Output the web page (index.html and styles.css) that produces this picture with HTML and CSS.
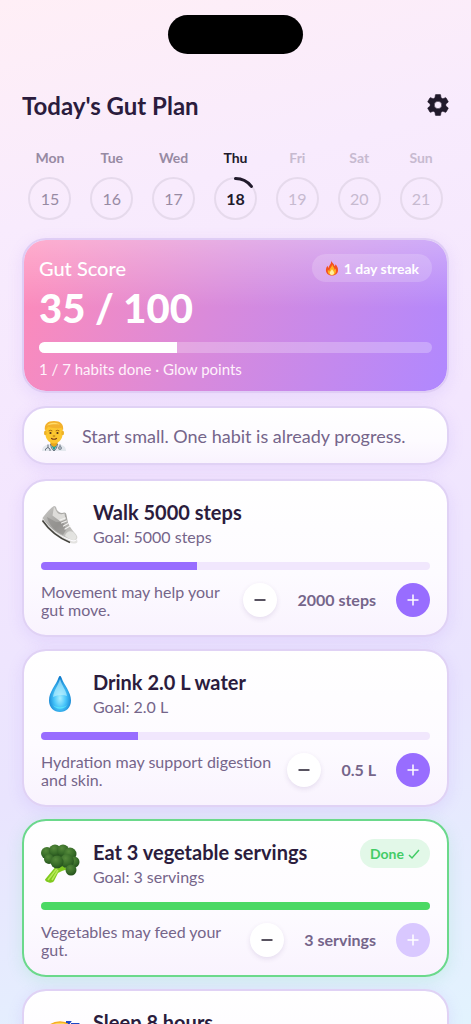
FILE: index.html
```html
<!DOCTYPE html>
<html lang="en">
<head>
    <meta charset="UTF-8">
    <meta name="viewport" content="width=device-width, initial-scale=1.0">
    <title>Today's Gut Plan</title>
    <link rel="stylesheet" href="styles.css">
</head>
<body>
    <div class="app">
        <div class="island"></div>
        <header class="header">
            <h1>Today's Gut Plan</h1>
            <button type="button" class="settings" aria-label="Settings">
                <svg viewBox="2 2 20 20" width="22" height="22"><path fill="#211a2b" stroke="#211a2b" stroke-width=".5" stroke-linejoin="round" d="M19.14 12.94c.04-.3.06-.61.06-.94s-.02-.64-.07-.94l2.03-1.58a.49.49 0 0 0 .12-.61l-1.92-3.32a.49.49 0 0 0-.59-.22l-2.39.96a7 7 0 0 0-1.62-.94l-.36-2.54A.48.48 0 0 0 13.92 2.4h-3.84a.48.48 0 0 0-.47.41l-.36 2.54c-.59.24-1.13.57-1.62.94l-2.39-.96a.48.48 0 0 0-.59.22L2.74 8.87a.48.48 0 0 0 .12.61l2.03 1.58c-.05.3-.09.63-.09.94s.02.64.07.94l-2.03 1.58a.49.49 0 0 0-.12.61l1.92 3.32c.12.22.37.29.59.22l2.39-.96c.5.38 1.03.7 1.62.94l.36 2.54c.05.24.24.41.48.41h3.84c.24 0 .44-.17.47-.41l.36-2.54c.59-.24 1.13-.56 1.62-.94l2.39.96c.22.08.47 0 .59-.22l1.92-3.32a.48.48 0 0 0-.12-.61zM12 15.4a3.4 3.4 0 1 1 0-6.8 3.4 3.4 0 0 1 0 6.8z"/></svg>
            </button>
        </header>

        <div class="week">
            <div class="day"><span>Mon</span><span class="date">15</span></div>
            <div class="day"><span>Tue</span><span class="date">16</span></div>
            <div class="day"><span>Wed</span><span class="date">17</span></div>
            <div class="day today">
                <span>Thu</span>
                <span class="date">18
                    <svg class="ring" viewBox="0 0 42 42"><path d="M21 1.500A19.500 19.500 0 0 1 36.500 9.200" fill="none" stroke="#211a2b" stroke-width="3" stroke-linecap="round"/></svg>
                </span>
            </div>
            <div class="day future"><span>Fri</span><span class="date">19</span></div>
            <div class="day future"><span>Sat</span><span class="date">20</span></div>
            <div class="day future"><span>Sun</span><span class="date">21</span></div>
        </div>

        <section class="score">
            <div class="score-top">
                <h2>Gut Score</h2>
                <span class="streak">
                    <svg viewBox="0 0 14 16" width="14" height="16">
                        <path fill="#f4511e" d="M6 .6c.8 2 3.200 3.200 3.600 5.600.6-.5.9-1.200.9-2 1.800 2 2.700 4 2.500 6.200C12.700 13.600 10.200 15.500 7 15.500S1.100 13.500.9 10.500c-.1-2 .7-3.600 1.700-4.800.1 1.100.4 1.800 1 2.300C4.100 5 6.900 3.700 6 .6z"/>
                        <path fill="#ffb020" d="M7.200 4.500c.4 2 2.300 3 2.400 5.200.5-.3.8-.8 1-1.300 1.300 3.700-.5 6.700-3.600 6.700-3 0-4.800-2.200-4.100-5.500.4.8.9 1.200 1.500 1.400-.1-2.500 2.500-3.700 2.800-6.500z"/>
                        <path fill="#fff0a0" d="M7 9c.3 1.500 2 2.200 2 3.800 0 1.300-.9 2.200-2.100 2.200-1.300 0-2.200-.9-2.100-2.200C4.900 11.300 6.700 10.600 7 9z"/>
                    </svg>
                    1 day streak
                </span>
            </div>
            <div class="points">35 / 100</div>
            <div class="bar bar-score"><div class="fill" style="width: 35%"></div></div>
            <p>1 / 7 habits done · Glow points</p>
        </section>

        <section class="tip">
            <svg viewBox="0 0 26 32" width="26" height="32">
                <path fill="#e4e8ee" d="M1 31c0-4.500 3-6 8-7h8c5 1 8 2.500 8 7z"/>
                <path fill="#23a093" d="M9.500 23.500h7L13 31z"/>
                <path fill="#e9a51b" d="M9.500 20h7v5L13 27l-3.500-2z"/>
                <path fill="#fcc62f" d="M4.500 9.500C4.500 4 8 2.500 13 2.500s8.500 1.500 8.500 7v5c0 5-4.500 9-8.500 9s-8.500-4-8.500-9z"/>
                <ellipse cx="4.300" cy="13" rx="1.300" ry="2.200" fill="#eeb126"/>
                <ellipse cx="21.700" cy="13" rx="1.300" ry="2.200" fill="#eeb126"/>
                <path fill="#f3b12c" d="M4 11C2.800 4 6.500 1 13 1s10.200 3 9 10l-1.500-3.300C15 8.800 10 8 7 6.500 6.500 8.500 5 9 4 11z"/>
                <path fill="#ffdc69" d="M6 5.500C8 2.500 14 1.500 19 4.500 15 4 10 4 6 5.500z"/>
                <path stroke="#a66a14" fill="none" stroke-linecap="round" d="M8 10.700q1.500-1 3 0M15 10.700q1.500-1 3 0M12.200 16h1.600"/>
                <circle cx="9.500" cy="13" r="1.100" fill="#4f301a"/>
                <circle cx="16.500" cy="13" r="1.100" fill="#4f301a"/>
                <path stroke="#7d3d17" fill="none" stroke-width="1.200" stroke-linecap="round" d="M10.500 18.500q2.500 1.500 5 0"/>
                <path stroke="#68727f" fill="none" d="M7 24.500v3.500M19 24.500v2M4.500 30.500V29q2.500-3 4.500 0v2M9.500 24l1 4L13 31l2.500-3 1-4"/>
                <circle cx="19" cy="28" r="1.600" fill="#a5afba" stroke="#68727f" stroke-width=".6"/>
            </svg>
            <p>Start small. One habit is already progress.</p>
        </section>

        <main class="habits">
            <article class="habit">
                <div class="habit-head">
                    <svg viewBox="0 0 40 40" width="40" height="40">
                        <defs>
                            <linearGradient id="shoe" x1="0" y1="0" x2="1" y2="1"><stop offset="0" stop-color="#c9c8c6"/><stop offset=".5" stop-color="#a3a29f"/><stop offset="1" stop-color="#dddcd9"/></linearGradient>
                        </defs>
                        <path fill="#e4e3e1" d="M1 14c7 9 16 17 27 22 4 2 7 2 8-1l.5 3c-1 2-5 2-9 .5C17 34 7 27 1 18z"/>
                        <path fill="none" stroke="#45443f" stroke-width="1.500" d="M1.500 16.500C8 26 18 34 29 38.500"/>
                        <path fill="url(#shoe)" d="M1.500 14C4 11 8 5 13 2c1.500 0 2.500 1 2.700 3.500 1.800 3 4.500 4 7.500 3 1.300 0 2 .8 2.200 2.200l1.600 8c2 5 5 8 7.500 11 3 3 2.500 7-2.500 6.500C20 33 8 24 1.500 14z"/>
                        <path fill="#dddcd9" d="M13 2.500l2 4c2 4 5 4.500 8.500 3l1 6-5 2-8-6z"/>
                        <path fill="#83827f" d="M6 13l9 5 7 0 3 8-3 5C14 27 8 21 6 13z" opacity=".5"/>
                        <path fill="none" stroke="#f3f2f0" stroke-width="1.200" stroke-linecap="round" d="M19 16l5.500-2M20.500 19l5-2M22.500 22l4.500-2.500M24 25l5-3"/>
                        <path fill="#e9e8e6" d="M24 32c1-4 5-6 8-4 4 3 4 7 1 8-3 0-6-2-9-4z" opacity=".8"/>
                    </svg>
                    <div class="habit-title">
                        <h3>Walk 5000 steps</h3>
                        <p>Goal: 5000 steps</p>
                    </div>
                </div>
                <div class="bar"><div class="fill" style="width: 40%"></div></div>
                <div class="habit-foot">
                    <p>Movement may help your gut move.</p>
                    <div class="stepper">
                        <button type="button" class="minus" aria-label="Less"><svg viewBox="0 0 12 12" width="12" height="12"><path d="M.5 6h11"/></svg></button>
                        <span>2000 steps</span>
                        <button type="button" class="plus" aria-label="More"><svg viewBox="0 0 12 12" width="12" height="12"><path d="M.5 6h11M6 .5v11"/></svg></button>
                    </div>
                </div>
            </article>

            <article class="habit">
                <div class="habit-head">
                    <svg viewBox="0 0 40 40" width="40" height="40">
                        <defs>
                            <radialGradient id="drop" cx=".5" cy=".62" r=".6"><stop offset="0" stop-color="#a9efff"/><stop offset=".45" stop-color="#48c5fa"/><stop offset="1" stop-color="#0875c9"/></radialGradient>
                        </defs>
                        <path fill="url(#drop)" d="M19 2c.7 0 1 .5 1.500 1.800C23 11 30 18 30 26.500 30 33.500 25 38 19 38S8 33.500 8 26.500C8 18 15 11 17.500 3.800 18 2.500 18.300 2 19 2z"/>
                        <path fill="#c6f3ff" opacity=".6" d="M19 5c2 7 6 11 7 17-4-2-10-1-14 1C13 16 17 12 19 5z"/>
                        <path fill="#5eecfb" opacity=".7" d="M12 31c3 5 11 5 14 0-3 3-11 3-14 0z"/>
                    </svg>
                    <div class="habit-title">
                        <h3>Drink 2.0 L water</h3>
                        <p>Goal: 2.0 L</p>
                    </div>
                </div>
                <div class="bar"><div class="fill" style="width: 25%"></div></div>
                <div class="habit-foot">
                    <p>Hydration may support digestion and skin.</p>
                    <div class="stepper">
                        <button type="button" class="minus" aria-label="Less"><svg viewBox="0 0 12 12" width="12" height="12"><path d="M.5 6h11"/></svg></button>
                        <span>0.5 L</span>
                        <button type="button" class="plus" aria-label="More"><svg viewBox="0 0 12 12" width="12" height="12"><path d="M.5 6h11M6 .5v11"/></svg></button>
                    </div>
                </div>
            </article>

            <article class="habit done">
                <div class="habit-head">
                    <svg viewBox="0 0 40 40" width="40" height="40">
                        <defs>
                            <radialGradient id="floret" cx=".4" cy=".3" r=".75"><stop offset="0" stop-color="#558a3b"/><stop offset=".6" stop-color="#376b28"/><stop offset="1" stop-color="#214c1a"/></radialGradient>
                        </defs>
                        <path fill="#80c91f" d="M16 21l6 1 5 3-6 2-4 2-4 8c-1 1.500-3 2-5 1.500-2-.5-4-1.500-4-3z"/>
                        <path fill="none" stroke="#b6e957" stroke-width="1.500" d="M7 36l10-13M11 36l6-10"/>
                        <circle cx="19" cy="13" r="9" fill="#2c5d21"/>
                        <g fill="url(#floret)">
                            <circle cx="6" cy="9" r="6"/>
                            <circle cx="14" cy="6.500" r="6"/>
                            <circle cx="22" cy="6.500" r="6"/>
                            <circle cx="29" cy="10" r="6.500"/>
                            <circle cx="8" cy="15" r="5"/>
                            <circle cx="33" cy="18" r="5.500"/>
                            <circle cx="26" cy="17" r="7"/>
                            <circle cx="30" cy="26" r="5.500"/>
                            <circle cx="16" cy="18" r="6.500"/>
                        </g>
                    </svg>
                    <div class="habit-title">
                        <h3>Eat 3 vegetable servings</h3>
                        <p>Goal: 3 servings</p>
                    </div>
                    <span class="badge">Done <svg viewBox="0 0 12 12" width="12" height="12"><path d="M1 7l3 3 7-8" fill="none" stroke="currentColor" stroke-width="1.500"/></svg></span>
                </div>
                <div class="bar"><div class="fill" style="width: 100%"></div></div>
                <div class="habit-foot">
                    <p>Vegetables may feed your gut.</p>
                    <div class="stepper">
                        <button type="button" class="minus" aria-label="Less"><svg viewBox="0 0 12 12" width="12" height="12"><path d="M.5 6h11"/></svg></button>
                        <span>3 servings</span>
                        <button type="button" class="plus" aria-label="More" disabled><svg viewBox="0 0 12 12" width="12" height="12"><path d="M.5 6h11M6 .5v11"/></svg></button>
                    </div>
                </div>
            </article>

            <article class="habit">
                <div class="habit-head">
                    <svg viewBox="0 0 40 40" width="40" height="40">
                        <circle cx="19" cy="26" r="18" fill="#fdd95a" stroke="#f5ad22" stroke-width="1.500"/>
                        <path fill="none" stroke="#1d48c4" stroke-width="1.800" d="M20 11h5l-4 5h5M25 8h4l-3 4h5M30 10h7l-6 8h7"/>
                    </svg>
                    <div class="habit-title">
                        <h3>Sleep 8 hours</h3>
                        <p>Goal: 8 hours</p>
                    </div>
                </div>
                <div class="bar"><div class="fill" style="width: 0%"></div></div>
            </article>
        </main>
    </div>
</body>
</html>
```

FILE: styles.css
```css
* {
    box-sizing: border-box;
}
body {
    margin: 0;
    font-family: Lato, sans-serif;
    color: #2b1c3d;
}
h1, h2, h3, p {
    margin: 0;
}
button {
    padding: 0;
    border: none;
    font-family: inherit;
    cursor: pointer;
}
svg {
    display: block;
    flex-shrink: 0;
}
.app {
    height: 100vh;
    overflow: hidden;
    padding: 15px 22px 0;
    background: linear-gradient(165deg, #ffeff6 0%, #f8ebfd 20%, #f3e6fe 45%, #e9e4fe 70%, #e2f3fe 100%);
}
.island {
    width: 135px;
    height: 39px;
    margin: 0 auto;
    border-radius: 20px;
    background: #000;
}
.header {
    display: flex;
    justify-content: space-between;
    align-items: center;
    height: 32px;
    margin-top: 35px;
}
h1 {
    font-size: 24px;
    font-weight: 700;
}
.settings {
    width: 22px;
    height: 22px;
    background: none;
}

/* week strip */
.week {
    display: grid;
    grid-template-columns: repeat(7, 1fr);
    margin: 27px -3px 0;
}
.day {
    display: flex;
    flex-direction: column;
    align-items: center;
    gap: 9px;
    font-size: 14px;
    font-weight: 700;
    line-height: 20px;
    color: #978aa3;
}
.date {
    position: relative;
    display: flex;
    align-items: center;
    justify-content: center;
    width: 43px;
    height: 43px;
    border: 2px solid #e6daec;
    border-radius: 50%;
    font-size: 16px;
    font-weight: 400;
}
.today, .today .date {
    color: #211a2b;
    font-weight: 700;
}
.future {
    color: #c7bad0;
}
.ring {
    position: absolute;
    inset: -2px;
}

/* score card */
.score {
    margin-top: 18px;
    padding: 14px 15px 12px;
    border: 2px solid #dfcdf5;
    border-radius: 24px;
    background: linear-gradient(180deg, rgba(255, 255, 255, 0.3), rgba(255, 255, 255, 0) 45%), linear-gradient(110deg, #ff8bb8, #d98adb 45%, #b088ff);
    background-clip: padding-box;
    box-shadow: 0 4px 16px rgba(155, 110, 240, 0.14);
    color: #fff;
}
.score-top {
    display: flex;
    justify-content: space-between;
    align-items: center;
}
h2 {
    font-size: 20px;
    font-weight: 500;
    line-height: 24px;
}
.streak {
    display: flex;
    align-items: center;
    gap: 5px;
    height: 28px;
    padding: 0 13px;
    border-radius: 14px;
    background: rgba(255, 255, 255, 0.18);
    font-size: 14px;
    font-weight: 700;
}
.points {
    margin-top: 2px;
    font-size: 40px;
    font-weight: 900;
    line-height: 48px;
}
.score p {
    margin-top: 6px;
    font-size: 15px;
    line-height: 20px;
    color: #fff2fb;
}
.bar {
    height: 8px;
    margin-top: 13px;
    border-radius: 6px;
    overflow: hidden;
    background: #f1e7fd;
}
.fill {
    height: 100%;
    background: #986dff;
}
.bar-score {
    height: 11px;
    margin-top: 10px;
    background: rgba(255, 255, 255, 0.25);
}
.bar-score .fill {
    background: #fff;
}

/* white cards */
.tip, .habit {
    border: 2px solid #e0d2f5;
    border-radius: 24px;
    background: linear-gradient(180deg, #fff, #fdfbff 60%, #f9f3fe);
    background-clip: padding-box;
    box-shadow: 0 4px 16px rgba(155, 110, 240, 0.14);
}
.tip {
    display: flex;
    align-items: center;
    gap: 15px;
    min-height: 59px;
    margin-top: 13px;
    padding: 0 17px;
    font-size: 18px;
    color: #75658a;
}
.habits {
    display: flex;
    flex-direction: column;
    gap: 12px;
    margin-top: 14px;
}
.habit {
    padding: 18px 17px 16px;
}
.habit-head {
    display: flex;
    align-items: center;
    gap: 12px;
}
.habit-title {
    flex: 1;
}
h3 {
    font-size: 20px;
    font-weight: 700;
    line-height: 26px;
}
.habit-title p {
    font-size: 16px;
    line-height: 24px;
    color: #75658a;
}
.habit-foot {
    display: flex;
    justify-content: space-between;
    gap: 12px;
    margin-top: 13px;
    font-size: 16px;
    line-height: 18px;
    color: #75658a;
}
.stepper {
    display: flex;
    align-items: center;
    gap: 20px;
    height: 34px;
    flex-shrink: 0;
    font-weight: 700;
}
.minus, .plus {
    display: flex;
    align-items: center;
    justify-content: center;
    width: 34px;
    height: 34px;
    border-radius: 50%;
    fill: none;
    stroke-width: 1.5;
}
.minus {
    background: #fff;
    box-shadow: 0 2px 5px rgba(80, 50, 120, 0.12);
    stroke: #211a2b;
}
.plus {
    background: #986dff;
    stroke: #fff;
}
.plus:disabled {
    background: #d9c8ff;
}
.done {
    border-color: #6bd98b;
    box-shadow: 0 4px 16px rgba(90, 215, 150, 0.18);
}
.done .fill {
    background: #4bd964;
}
.badge {
    display: flex;
    align-items: center;
    align-self: flex-start;
    gap: 4px;
    height: 29px;
    padding: 0 10px;
    border-radius: 15px;
    background: #e2f8e8;
    font-size: 14px;
    font-weight: 700;
    color: #43cc66;
}
```
